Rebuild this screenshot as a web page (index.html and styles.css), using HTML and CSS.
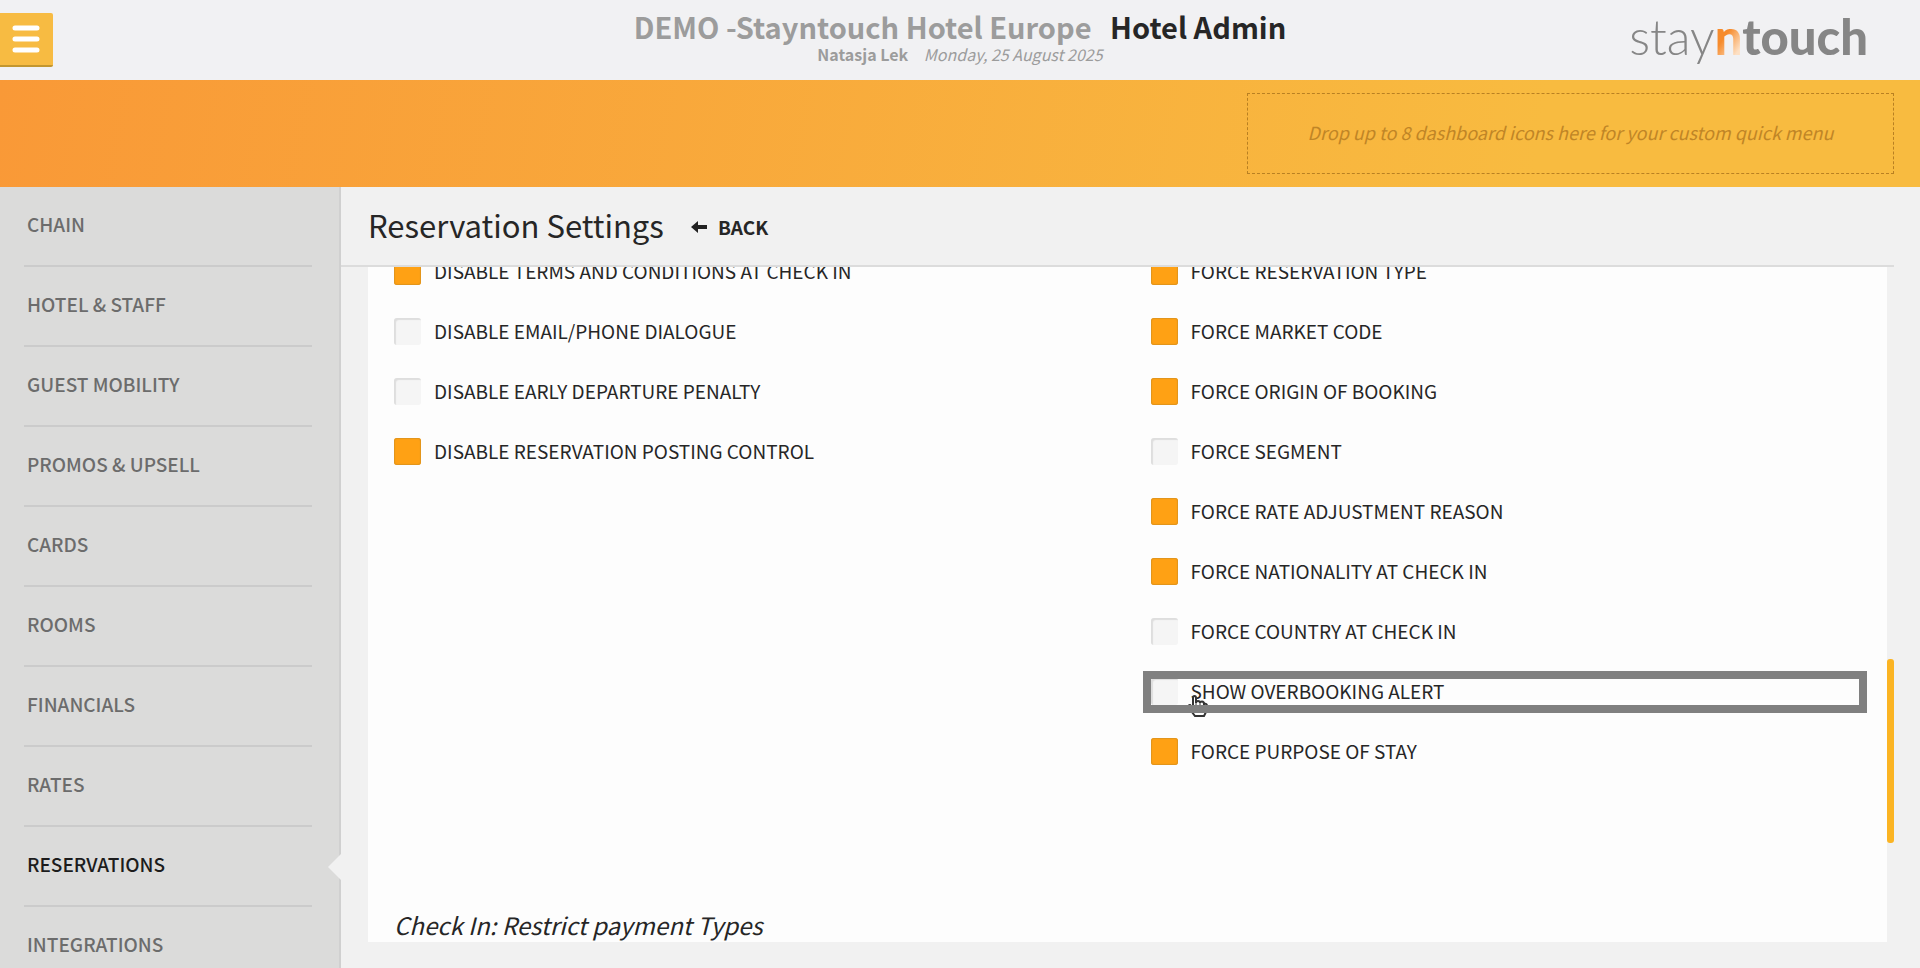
FILE: index.html
```
<!DOCTYPE html>
<html lang="en">
<head>
    <meta charset="UTF-8">
    <meta name="viewport" content="width=device-width, initial-scale=1.0">
    <title>Reservation Settings</title>
    <link rel="stylesheet" href="styles.css">
</head>
<body>
    <header class="top">
        <button class="menu-btn" type="button" aria-label="Menu">
            <svg width="28" height="28" viewBox="0 0 28 28">
                <path d="M3 3h22M3 14h22M3 25h22" stroke="#fff" stroke-width="5" stroke-linecap="round"/>
            </svg>
        </button>
        <div class="top-title">
            <h1><span class="hotel">DEMO -Stayntouch Hotel Europe</span> <span>Hotel Admin</span></h1>
            <p><strong>Natasja Lek</strong> <em>Monday, 25 August 2025</em></p>
        </div>
        <div class="logo"><span class="light">stay</span><span class="n">n</span><span>touch</span></div>
    </header>

    <div class="banner">
        <div class="drop-area">Drop up to 8 dashboard icons here for your custom quick menu</div>
    </div>

    <div class="wrap">
        <nav class="sidebar">
            <ul>
                <li><a href="#">CHAIN</a></li>
                <li><a href="#">HOTEL &amp; STAFF</a></li>
                <li><a href="#">GUEST MOBILITY</a></li>
                <li><a href="#">PROMOS &amp; UPSELL</a></li>
                <li><a href="#">CARDS</a></li>
                <li><a href="#">ROOMS</a></li>
                <li><a href="#">FINANCIALS</a></li>
                <li><a href="#">RATES</a></li>
                <li class="active"><a href="#">RESERVATIONS</a></li>
                <li><a href="#">INTEGRATIONS</a></li>
            </ul>
        </nav>

        <main>
            <div class="page-head">
                <h2>Reservation Settings</h2>
                <a class="back" href="#">
                    <svg width="16" height="12" viewBox="0 0 16 12">
                        <path d="M0 6L7 0V4H16V8H7V12Z" fill="#222"/>
                    </svg>
                    BACK
                </a>
            </div>

            <div class="panel-area">
                <div class="panel">
                    <form class="settings">
                        <div class="col">
                            <label><input type="checkbox" checked>DISABLE TERMS AND CONDITIONS AT CHECK IN</label>
                            <label><input type="checkbox">DISABLE EMAIL/PHONE DIALOGUE</label>
                            <label><input type="checkbox">DISABLE EARLY DEPARTURE PENALTY</label>
                            <label><input type="checkbox" checked>DISABLE RESERVATION POSTING CONTROL</label>
                        </div>
                        <div class="col">
                            <label><input type="checkbox" checked>FORCE RESERVATION TYPE</label>
                            <label><input type="checkbox" checked>FORCE MARKET CODE</label>
                            <label><input type="checkbox" checked>FORCE ORIGIN OF BOOKING</label>
                            <label><input type="checkbox">FORCE SEGMENT</label>
                            <label><input type="checkbox" checked>FORCE RATE ADJUSTMENT REASON</label>
                            <label><input type="checkbox" checked>FORCE NATIONALITY AT CHECK IN</label>
                            <label><input type="checkbox">FORCE COUNTRY AT CHECK IN</label>
                            <label class="highlight"><input type="checkbox">SHOW OVERBOOKING ALERT
                                <svg class="pointer" width="22" height="22" viewBox="0 0 22 22">
                                    <path d="M6 13V3Q6 1 7.500 1T9 3V8Q9 6 11 6T13 8Q13 6.500 15 6.500T17 9Q20 8 20 11V15L17 21H8L2 13Q1 10 3 10Z" fill="#fff" stroke="#333" stroke-width="2"/>
                                    <path d="M9 8v4M13 8v4M17 9v4M9 18v-3M12 18v-3M15 18v-3" stroke="#333" stroke-width="1"/>
                                </svg>
                            </label>
                            <label><input type="checkbox" checked>FORCE PURPOSE OF STAY</label>
                        </div>
                    </form>
                    <h3>Check In: Restrict payment Types</h3>
                </div>
                <div class="scroll-thumb"></div>
            </div>
        </main>
    </div>
</body>
</html>
```

FILE: styles.css
```
*, *::before, *::after {
    box-sizing: border-box;
}
body {
    margin: 0;
    height: 100vh;
    display: flex;
    flex-direction: column;
    overflow: hidden;
    font-family: "Noto Sans CJK SC", "Noto Sans", sans-serif;
    font-size: 19px;
    line-height: 24px;
    color: #262626;
    background: #f1f1f1;
}
h1, h2, h3, p, ul {
    margin: 0;
    padding: 0;
}
a {
    color: inherit;
    text-decoration: none;
}

/* top bar */
.top {
    flex: none;
    display: grid;
    grid-template-columns: 1fr auto 1fr;
    align-items: center;
    height: 80px;
    background: #f1f1f3;
}
.menu-btn {
    width: 53px;
    height: 54px;
    padding: 0 0 0 12px;
    border: 0;
    border-bottom: 2px solid #c2962f;
    border-radius: 0 2px 2px 0;
    background: #f7bb42;
}
.menu-btn svg {
    display: block;
}
.top-title {
    padding-bottom: 6px;
    text-align: center;
}
.top-title h1 {
    margin-bottom: 2px;
    font-size: 29px;
    line-height: 32px;
}
.hotel {
    margin-right: 12px;
    color: #9c9c9c;
}
.top-title p {
    font-size: 16px;
    line-height: 20px;
    color: #9c9c9c;
}
.top-title strong {
    margin-right: 12px;
}
.logo {
    justify-self: end;
    margin-right: 52px;
    padding-bottom: 8px;
    font-family: Lato, sans-serif;
    font-size: 49px;
    font-weight: 900;
    line-height: 60px;
    color: #868686;
}
.logo .light {
    font-weight: 300;
}
.logo .n {
    color: transparent;
    background: linear-gradient(125deg, #f68b2c 45%, #fde0c4 80%);
    background-clip: text;
    -webkit-background-clip: text;
}

/* quick menu */
.banner {
    flex: none;
    display: flex;
    justify-content: flex-end;
    padding: 13px 26px;
    height: 107px;
    background: linear-gradient(100deg, #f99937, #f8bb40 80%);
}
.drop-area {
    display: flex;
    align-items: center;
    justify-content: center;
    width: 647px;
    padding-bottom: 4px;
    border: 1px dashed #b98022;
    font-size: 18px;
    font-style: italic;
    color: #c08526;
}

.wrap {
    flex: 1;
    display: flex;
    min-height: 0;
}

/* left menu */
.sidebar {
    flex: none;
    width: 341px;
    padding: 0 27px 0 24px;
    background: #dbdbda;
    border-right: 2px solid #d0d0d0;
}
.sidebar ul {
    list-style: none;
}
.sidebar li {
    position: relative;
    height: 80px;
    border-bottom: 2px solid #cbcbcb;
    font-weight: 500;
    color: #6c6c6c;
}
.sidebar a {
    display: block;
    padding: 25px 3px;
}
.sidebar .active {
    color: #1c1c1c;
}
.sidebar .active::after {
    content: "";
    position: absolute;
    right: -29px;
    top: 27px;
    border: 13px solid transparent;
    border-left: 0;
    border-right-color: #f1f1f1;
}

/* content */
main {
    flex: 1;
    display: flex;
    flex-direction: column;
    min-width: 0;
    padding-bottom: 26px;
}
.page-head {
    flex: none;
    display: flex;
    align-items: center;
    gap: 27px;
    height: 80px;
    padding: 0 0 2px 27px;
    border-bottom: 2px solid #dcdcdc;
    margin-right: 26px;
}
.page-head h2 {
    font-size: 31px;
    font-weight: 400;
    line-height: 40px;
}
.back {
    display: flex;
    align-items: center;
    gap: 11px;
    padding-top: 4px;
    font-weight: bold;
}
.panel-area {
    position: relative;
    flex: 1;
    min-height: 0;
    margin: 0 33px 0 27px;
}
.panel {
    height: 100%;
    padding: 0 26px;
    overflow: hidden;
    background: #fdfdfd;
}
/* list is scrolled down a bit */
.settings {
    display: grid;
    grid-template-columns: 1fr 1fr;
    gap: 46px;
    margin-top: -26px;
}
.settings label {
    position: relative;
    display: flex;
    align-items: center;
    gap: 13px;
    height: 60px;
}
.settings input {
    appearance: none;
    -webkit-appearance: none;
    width: 27px;
    height: 27px;
    margin: 0;
    border-radius: 3px;
    background: #f5f5f5;
    box-shadow: inset 2px 2px 1px #dedede;
}
.settings input:checked {
    background: #ffa114;
    box-shadow: inset 0 0 1px 1px #e0941c;
}
.highlight::after {
    content: "";
    position: absolute;
    left: -8px;
    right: -6px;
    top: 10px;
    height: 42px;
    border: 8px solid #808080;
}
.pointer {
    position: absolute;
    left: 36px;
    top: 34px;
}
.panel h3 {
    margin-top: 126px;
    font-size: 24px;
    font-weight: 400;
    font-style: italic;
    line-height: 36px;
}
.scroll-thumb {
    position: absolute;
    right: -7px;
    top: 58%;
    width: 7px;
    height: 184px;
    border-radius: 3px;
    background: #fbb423;
}
```
